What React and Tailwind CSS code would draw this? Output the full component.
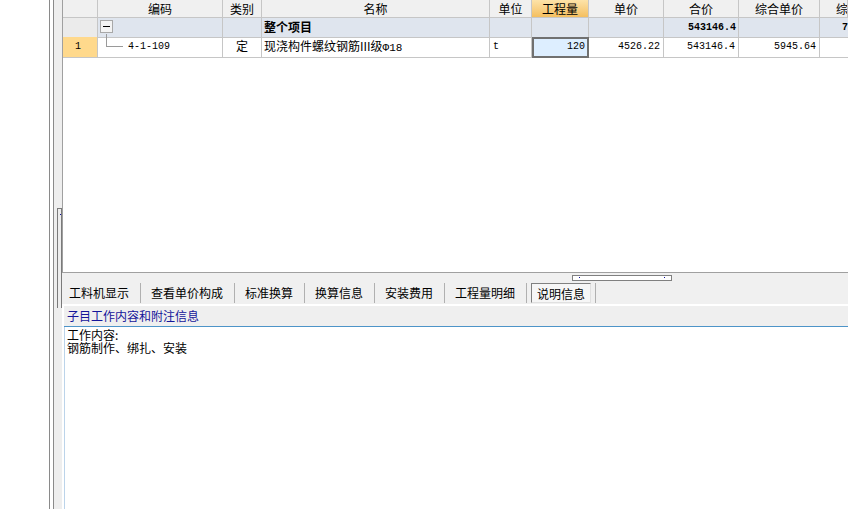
import React from 'react';

const cjk = "font-['SimSun','Noto_Sans_CJK_SC',sans-serif]";
const mono = "font-['Liberation_Mono','Noto_Sans_CJK_SC',monospace]";

const cols = 'grid grid-cols-[35px_125px_39px_228px_42px_57px_75px_75px_81px_1fr]';

const headers = ['', '编码', '类别', '名称', '单位', '工程量', '单价', '合价', '综合单价', '综'];

const tabs = ['工料机显示', '查看单价构成', '标准换算', '换算信息', '安装费用', '工程量明细', '说明信息'];

function HeaderRow() {
  return (
    <div className={`${cols} h-[18px] bg-[#f0f0f0]`}>
      {headers.map((h, i) => (
        <div
          key={i}
          className={`border-r border-b border-[#c6c6c6] text-center text-[12px] leading-[17px] text-black overflow-hidden whitespace-nowrap ${
            i === 5 ? 'bg-gradient-to-b from-[#fde3a8] to-[#f4bf5f]' : ''
          } ${i === 9 ? 'text-left pl-[16px]' : ''}`}
        >
          {h}
        </div>
      ))}
    </div>
  );
}

function GroupRow() {
  return (
    <div className={`${cols} h-[19px] bg-[#dfe5ee]`}>
      <div className="border-r border-b border-[#c6c6c6] bg-[#ebebeb]" />
      <div className="border-r border-b border-[#c6c6c6] relative">
        <div className="absolute left-[2px] top-[2px] w-[13px] h-[13px] border border-[#a8a8a8] bg-[#f3f3f3] flex items-center justify-center">
          <div className="w-[7px] h-px bg-black" />
        </div>
        <div className="absolute left-[8px] top-[16px] w-px h-[12px] bg-[#9a9a9a]" />
      </div>
      <div className="border-r border-b border-[#c6c6c6]" />
      <div className="border-r border-b border-[#c6c6c6] pl-[2px] text-[12px] leading-[18px] font-bold">整个项目</div>
      <div className="border-r border-b border-[#c6c6c6]" />
      <div className="border-r border-b border-[#c6c6c6]" />
      <div className="border-r border-b border-[#c6c6c6]" />
      <div className={`border-r border-b border-[#c6c6c6] text-right pr-[2px] text-[10px] leading-[19px] font-bold ${mono}`}>543146.4</div>
      <div className="border-r border-b border-[#c6c6c6]" />
      <div className={`border-b border-[#c6c6c6] pl-[22px] text-[10px] leading-[19px] font-bold ${mono}`}>7</div>
    </div>
  );
}

function ItemRow() {
  return (
    <div className={`${cols} h-[19px] bg-white`}>
      <div className="border-r border-b border-[#c6c6c6] bg-[#ffd98c] pl-[12px] text-[10px] leading-[19px] font-['Liberation_Mono',monospace]">1</div>
      <div className="border-r border-b border-[#c6c6c6] relative">
        <div className="absolute left-[8px] top-0 w-px h-[10px] bg-[#9a9a9a]" />
        <div className="absolute left-[8px] top-[9px] w-[17px] h-px bg-[#9a9a9a]" />
        <div className={`pl-[30px] text-[10px] leading-[20px] ${mono}`}>4-1-109</div>
      </div>
      <div className="border-r border-b border-[#c6c6c6] text-center text-[12px] leading-[18px]">定</div>
      <div className="border-r border-b border-[#c6c6c6] pl-[2px] text-[12px] leading-[18px] whitespace-nowrap">
        现浇构件螺纹钢筋III级<span className={`text-[11px] ${mono}`}>Φ18</span>
      </div>
      <div className={`border-r border-b border-[#c6c6c6] pl-[3px] text-[10px] leading-[19px] ${mono}`}>t</div>
      <div className={`border-2 border-[#707070] bg-[#ddeeff] text-right pr-[2px] text-[10px] leading-[15px] ${mono}`}>120</div>
      <div className={`border-r border-b border-[#c6c6c6] text-right pr-[3px] text-[10px] leading-[19px] ${mono}`}>4526.22</div>
      <div className={`border-r border-b border-[#c6c6c6] text-right pr-[3px] text-[10px] leading-[19px] ${mono}`}>543146.4</div>
      <div className={`border-r border-b border-[#c6c6c6] text-right pr-[3px] text-[10px] leading-[19px] ${mono}`}>5945.64</div>
      <div className="border-b border-[#c6c6c6]" />
    </div>
  );
}

export default function App() {
  return (
    <div className={`w-[848px] h-[509px] flex bg-white overflow-hidden text-black ${cjk}`}>
      <div className="w-[49px] shrink-0 bg-white" />
      <div className="w-px shrink-0 bg-[#8a8a8a]" />
      <div className="w-[3px] shrink-0 bg-white" />
      <div className="w-px shrink-0 bg-[#8a8a8a]" />
      <div className="w-[8px] shrink-0 bg-[#eeeeee] flex flex-col pt-[208px] pl-[3px]">
        <div className="w-[5px] h-[100px] border border-[#7a7a7a] border-b-0 relative">
          <div className="absolute left-[2px] top-[5px] w-px h-px bg-[#1010a0]" />
        </div>
      </div>
      <div className="flex-1 flex flex-col min-w-0">
        <div className="h-[273px] shrink-0 border-l border-b border-[#a0a0a0] bg-white">
          <HeaderRow />
          <GroupRow />
          <ItemRow />
        </div>
        <div className="h-[31px] shrink-0 bg-[#f0f0f0] relative flex items-center pl-[7px] text-[12px]">
          <div className="absolute left-[510px] top-[2px] w-[100px] h-[6px] border border-[#808080] bg-white">
            <div className="absolute left-[6px] top-[1px] w-px h-px bg-[#1010a0]" />
            <div className="absolute left-[91px] top-[1px] w-px h-px bg-[#1010a0]" />
          </div>
          {tabs.map((t, i) => {
            const last = i === tabs.length - 1;
            return (
              <div key={t} className="flex items-center mt-[8px]">
                {i > 0 && (
                  <div className={`w-px h-[20px] bg-[#b0b0b0] ml-[11px] ${last ? 'mr-[4px]' : 'mr-[10px]'}`} />
                )}
                {last ? (
                  <>
                    <div className="h-[20px] px-[5px] border border-[#808080] border-r-[#e0e0e0] border-b-[#e0e0e0] bg-[#f6f6f6] leading-[19px]">{t}</div>
                    <div className="w-px h-[20px] bg-[#b0b0b0] ml-[4px]" />
                  </>
                ) : (
                  <div className="leading-[20px]">{t}</div>
                )}
              </div>
            );
          })}
        </div>
        <div className="h-[2px] shrink-0 bg-white" />
        <div className="h-[21px] shrink-0 bg-[#efefef] ml-[2px] pl-[3px] text-[12px] leading-[20px] text-[#15159a] border-b border-[#4d94c8]">
          子目工作内容和附注信息
        </div>
        <div className="flex-1 bg-white ml-[2px] border-l border-[#bcd4ea] pl-[2px] pt-[1px] text-[12px] leading-[13px]">
          <div>工作内容:</div>
          <div>钢筋制作、绑扎、安装</div>
        </div>
      </div>
    </div>
  );
}
